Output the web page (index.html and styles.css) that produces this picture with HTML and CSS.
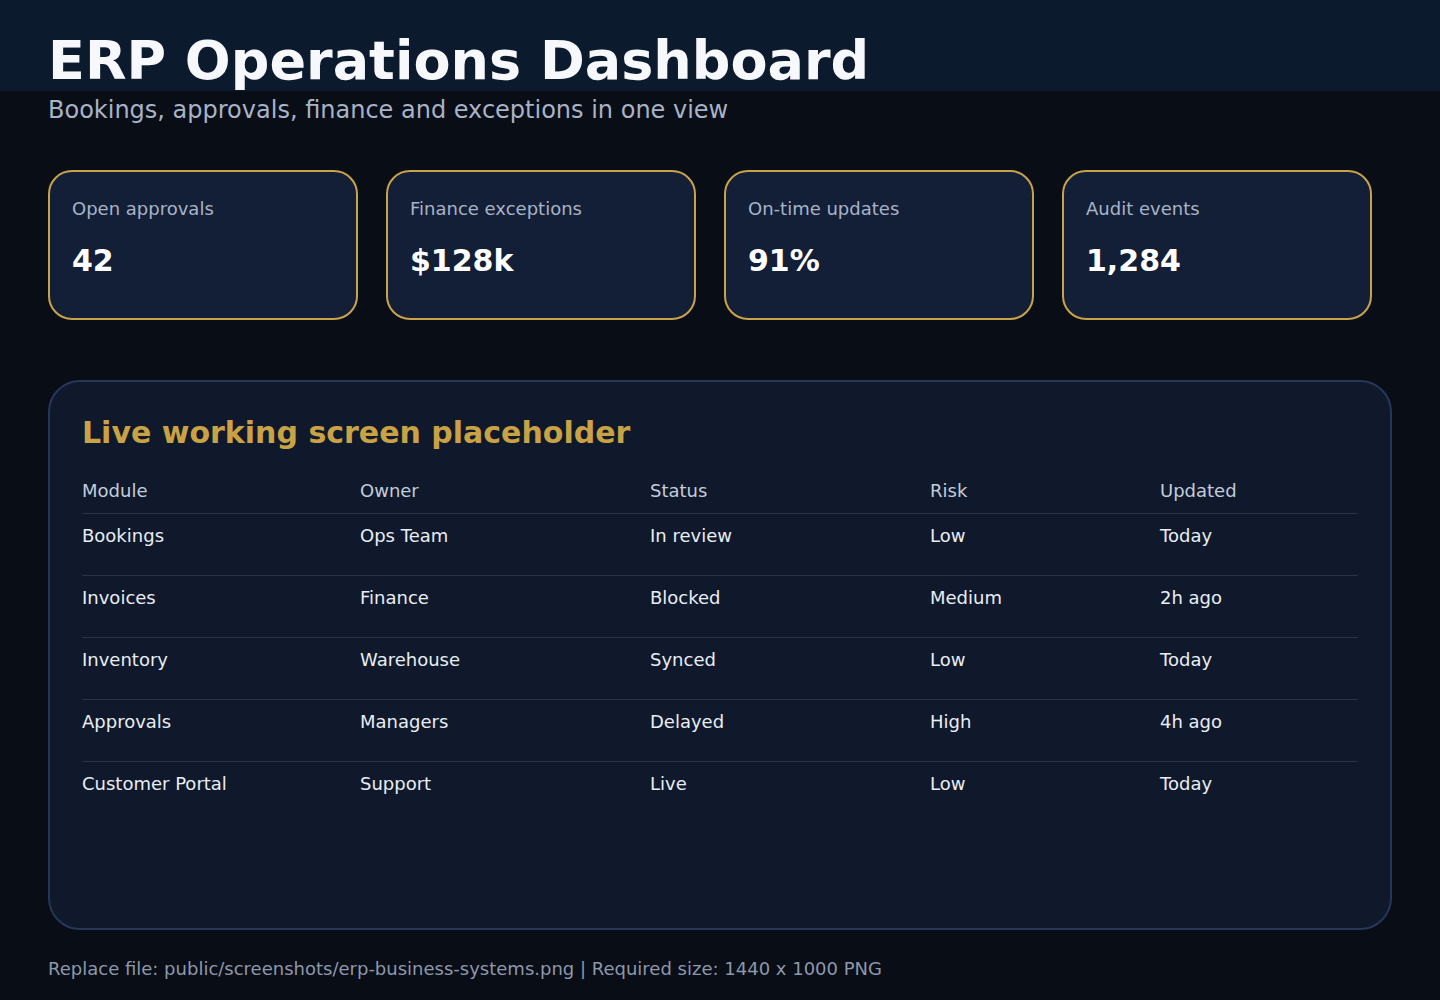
FILE: index.html
```html
<!DOCTYPE html>
<html lang="en">
<head>
<meta charset="utf-8">
<title>ERP Operations Dashboard</title>
<link rel="stylesheet" href="styles.css">
</head>
<body>
<main class="page">
  <header class="header">
    <h1 class="title">ERP Operations Dashboard</h1>
    <p class="subtitle">Bookings, approvals, finance and exceptions in one view</p>
  </header>

  <section class="cards">
    <div class="card"><div class="card-label">Open approvals</div><div class="card-value">42</div></div>
    <div class="card"><div class="card-label">Finance exceptions</div><div class="card-value">$128k</div></div>
    <div class="card"><div class="card-label">On-time updates</div><div class="card-value">91%</div></div>
    <div class="card"><div class="card-label">Audit events</div><div class="card-value">1,284</div></div>
  </section>

  <section class="panel">
    <h2 class="panel-title">Live working screen placeholder</h2>
    <div class="table">
      <div class="row head"><span>Module</span><span>Owner</span><span>Status</span><span>Risk</span><span>Updated</span></div>
      <div class="row"><span>Bookings</span><span>Ops Team</span><span>In review</span><span>Low</span><span>Today</span></div>
      <div class="row"><span>Invoices</span><span>Finance</span><span>Blocked</span><span>Medium</span><span>2h ago</span></div>
      <div class="row"><span>Inventory</span><span>Warehouse</span><span>Synced</span><span>Low</span><span>Today</span></div>
      <div class="row"><span>Approvals</span><span>Managers</span><span>Delayed</span><span>High</span><span>4h ago</span></div>
      <div class="row"><span>Customer Portal</span><span>Support</span><span>Live</span><span>Low</span><span>Today</span></div>
    </div>
  </section>

  <footer class="footer">Replace file: public/screenshots/erp-business-systems.png | Required size: 1440 x 1000 PNG</footer>
</main>
</body>
</html>
```

FILE: styles.css
```css
html, body {
  margin: 0;
  padding: 0;
}
body {
  width: 1440px;
  height: 1000px;
  overflow: hidden;
  background: linear-gradient(#0c1a2e 0, #0c1a2e 91px, #090d16 91px, #090d16 100%);
  font-family: "DejaVu Sans", "Liberation Sans", sans-serif;
  color: #e6ebf2;
}
.page {
  padding: 0 48px;
}
.header {
  padding-top: 33px;
}
.title {
  margin: 0;
  font-size: 54px;
  line-height: 56px;
  font-weight: 700;
  color: #f6f8fc;
}
.subtitle {
  margin: 9px 0 0;
  font-size: 24px;
  line-height: 24px;
  color: #a8b3c7;
}
.cards {
  margin-top: 48px;
  display: flex;
  gap: 28px;
}
.card {
  width: 310px;
  height: 150px;
  box-sizing: border-box;
  border: 2px solid #c9a24a;
  border-radius: 24px;
  background: #131f37;
  padding: 28px 22px;
}
.card-label {
  font-size: 18px;
  line-height: 18px;
  color: #a8b3c7;
}
.card-value {
  margin-top: 28px;
  font-size: 30px;
  line-height: 30px;
  font-weight: 700;
  color: #ffffff;
}
.panel {
  margin-top: 60px;
  width: 1344px;
  height: 550px;
  box-sizing: border-box;
  border: 2px solid #27375a;
  border-radius: 32px;
  background: #0f192b;
  padding: 36px 32px 0;
}
.panel-title {
  margin: 0;
  font-size: 30px;
  line-height: 30px;
  font-weight: 700;
  color: #c9a245;
}
.table {
  margin-top: 34px;
}
.row {
  display: grid;
  grid-template-columns: 278px 290px 280px 230px 1fr;
  font-size: 18px;
  line-height: 18px;
  color: #e9edf4;
  border-top: 1px solid #26334a;
  padding: 13px 0 30px;
}
.row.head {
  border-top: none;
  padding: 0 0 13px;
  color: #c3ccda;
}
.footer {
  margin-top: 30px;
  font-size: 18px;
  line-height: 18px;
  color: #8d98ac;
}
```
